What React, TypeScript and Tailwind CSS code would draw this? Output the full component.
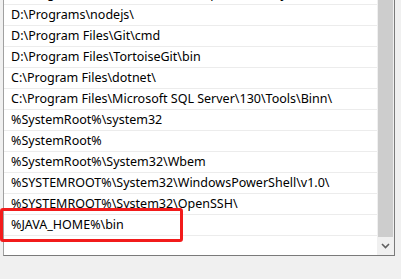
import React from 'react';

const paths = [
  'C:\\Program Files (x86)\\NVIDIA Corporation\\PhysX\\Common',
  'D:\\Programs\\nodejs\\',
  'D:\\Program Files\\Git\\cmd',
  'D:\\Program Files\\TortoiseGit\\bin',
  'C:\\Program Files\\dotnet\\',
  'C:\\Program Files\\Microsoft SQL Server\\130\\Tools\\Binn\\',
  '%SystemRoot%\\system32',
  '%SystemRoot%',
  '%SystemRoot%\\System32\\Wbem',
  '%SYSTEMROOT%\\System32\\WindowsPowerShell\\v1.0\\',
  '%SYSTEMROOT%\\System32\\OpenSSH\\',
  '%JAVA_HOME%\\bin',
  '',
];

export default function App() {
  return (
    <div
      className="relative w-[401px] h-[279px] overflow-hidden bg-[#f0f0f0]"
      style={{ fontFamily: '"Noto Sans", "Microsoft YaHei", sans-serif' }}
    >
      {/* list box, scrolled down */}
      <div className="ml-[3px] w-[392px] h-[256px] flex bg-white border-l border-r border-b border-l-[#a0a0a0] border-r-[#7a7a7a] border-b-[#7a7a7a]">
        <div className="flex-1 overflow-hidden">
          <div className="-mt-[16px]">
            {paths.map((p, i) => (
              <div
                key={i}
                className="h-[21px] border-b border-[#ececec] pl-[7px] text-[12.5px] leading-[20px] text-black whitespace-nowrap"
              >
                {p}
              </div>
            ))}
          </div>
        </div>
        {/* vertical scrollbar */}
        <div className="w-[17px] flex flex-col bg-[#f0f0f0]">
          <div className="flex-1 px-px">
            <div className="h-full bg-[#cdcdcd]" />
          </div>
          <div className="h-[18px] flex items-center justify-center">
            <svg width="9" height="6" viewBox="0 0 9 6">
              <path d="M1 1 L4.5 4.5 L8 1" fill="none" stroke="#606060" strokeWidth="1.6" />
            </svg>
          </div>
        </div>
      </div>

      {/* highlight annotation */}
      <div className="absolute left-0 top-[208px] w-[183px] h-[34px] border-[3px] border-[#f21b1b] rounded-[3px]" />
    </div>
  );
}
